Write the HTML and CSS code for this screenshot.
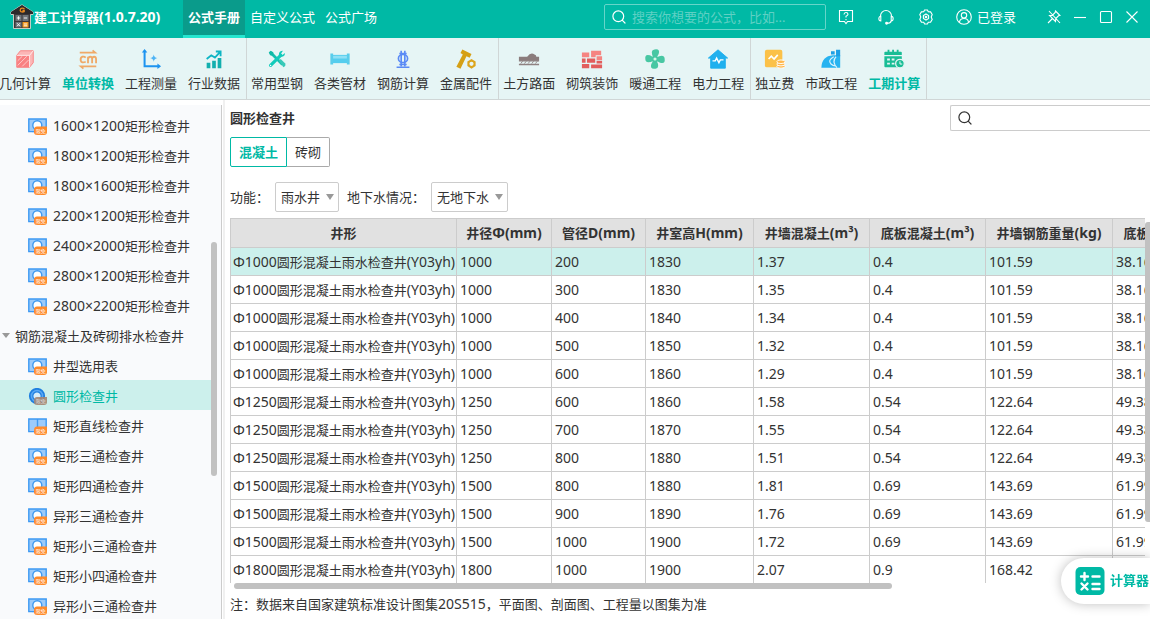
FILE: index.html
```html
<!DOCTYPE html>
<html lang="zh-CN">
<head>
<meta charset="utf-8">
<title>建工计算器</title>
<link rel="stylesheet" href="styles.css">
</head>
<body>
<svg class="defs" aria-hidden="true">
  <symbol id="search" viewBox="0 0 14 14"><g fill="none" stroke="currentColor" stroke-width="1.2" stroke-linecap="round"><circle cx="6.3" cy="6.3" r="5.4"/><path d="M10.4 10.4l2.6 2.6"/></g></symbol>
  <symbol id="badge" viewBox="0 0 20 18"><path d="M9 8.500h10v5.500q0 3-3 3H9q-3 0-3-3v-1.500q0-4 3-4z" fill="#ff8a2b"/><text x="7.800" y="14.800" font-size="5" fill="#fff">限免</text></symbol>
  <symbol id="well" viewBox="0 0 20 18"><path d="M.8 1h17.4v12.6H.8z" fill="#9ccbfb" stroke="#3d99f2" stroke-width="1.4"/><circle cx="9.3" cy="7.3" r="4.5" fill="#fff" stroke="#3d99f2" stroke-width="1.4"/><path d="M4 13.6h11" stroke="#3d99f2"/><use href="#badge"/></symbol>
  <symbol id="well-line" viewBox="0 0 20 18"><path d="M.8 1h17.4v12.6H.8z" fill="#9ccbfb" stroke="#3d99f2" stroke-width="1.4"/><path d="M9.5 1v12.6" stroke="#3d99f2" stroke-width="1.4"/><use href="#badge"/></symbol>
  <symbol id="well-round" viewBox="0 0 20 18"><circle cx="9" cy="8" r="7.2" fill="#5aa9f5" stroke="#1f7fe0" stroke-width="1.8"/><circle cx="9" cy="8" r="4.2" fill="#d8eefb" stroke="#1f7fe0" stroke-width="1.2"/><path d="M9 9h10v5q0 3-3 3H9q-3 0-3-3v-1q0-4 3-4z" fill="#a58672" opacity=".9"/><text x="7.800" y="14.800" font-size="5" fill="#ddd">限免</text></symbol>
</svg>

<header class="titlebar">
  <svg class="logo" viewBox="0 0 24 26"><path d="M12 .8L1 8v2.5h2.5V24.500h17V10.500H23V8z" fill="#3b3638" stroke="#efe3da" stroke-width=".8"/><path d="M12 1L1 8v2h22V8z" fill="#2c292b"/><path d="M14.500 4.800q-2.500-1.300-4 .2-.9 1.700.4 2.600 1.600.8 3.300 0V6.500h-1.700" fill="none" stroke="#e98b1e" stroke-width="1.300"/><path d="M5.500 11h6v6h-6zM12.500 11h6v6h-6zM5.500 18h6v5.500h-6z" fill="#6f7479"/><path d="M12.500 18h6v5.500h-6z" fill="#f39a1f"/><path d="M8.500 12.300v3.400M6.800 14h3.400M13.800 14h3.400M7 19.200l3 3M10 19.200l-3 3M13.800 20h3.400M13.800 21.800h3.400" stroke="#fff" stroke-width=".9"/></svg>
  <h1 class="app-name">建工计算器<span class="lat">(1.0.7.20)</span></h1>
  <nav class="tabs">
    <a href="#" class="tab active">公式手册</a>
    <a href="#" class="tab">自定义公式</a>
    <a href="#" class="tab">公式广场</a>
  </nav>
  <label class="top-search"><svg class="i14"><use href="#search"/></svg><input type="text" aria-label="搜索公式" placeholder="搜索你想要的公式，比如..."></label>
  <div class="actions">
    <button aria-label="帮助"><svg class="i16" viewBox="0 0 16 16"><path d="M1.500 1.500h13v11H9.600L8 14.500l-1.600-2H1.500z"/><path d="M6 5.500q.1-2 2-2t2 1.700Q10 6.300 8 7.300v1.200M8 10v1.200"/></svg></button>
    <button aria-label="客服"><svg class="i16" viewBox="0 0 16 16"><path d="M2.500 7.500V7a5.500 5.500 0 0 1 11 0v.5M2.800 7.200C.2 7.200.2 12 2.800 12zM13.200 7.200c2.600 0 2.600 4.800 0 4.800zM13.200 12q-.6 2.300-4 2.300"/><circle cx="8.600" cy="14.200" r=".9" fill="currentColor"/></svg></button>
    <button aria-label="设置"><svg class="i16" viewBox="0 0 16 16"><path d="M5.700 2.800L6.600 1h2.800l.9 1.800 2.300.1 1.600 2.600L13.200 8l1 2.500-1.600 2.600-2.300.1-.9 1.800H6.600l-.9-1.800-2.300-.1-1.600-2.600 1-2.500-1-2.500 1.600-2.600z"/><path d="M8 5l2.600 1.500v3L8 11 5.400 9.500v-3z"/><circle cx="8" cy="8" r=".8"/></svg></button>
    <button class="account"><svg class="i16" viewBox="0 0 16 16"><circle cx="8" cy="8" r="7.300"/><circle cx="8" cy="6.300" r="2.700"/><path d="M3.500 13q.5-3.500 4.500-3.500t4.500 3.500"/></svg>已登录</button>
  </div>
  <div class="window-buttons">
    <button aria-label="置顶"><svg class="i14" viewBox="0 0 14 14"><path d="M8.500 1l4.500 4.500-1.500.3-2.700 2.700-.3 3L2.500 5.500l3-.3 2.700-2.700zM5.500 8.500L1 13M2 1l11 12"/></svg></button>
    <button aria-label="最小化"><svg class="i14" viewBox="0 0 14 14"><path d="M1 7.500h12"/></svg></button>
    <button aria-label="最大化"><svg class="i14" viewBox="0 0 14 14"><rect x="1.500" y="1.500" width="11" height="11" rx="1"/></svg></button>
    <button aria-label="关闭"><svg class="i14" viewBox="0 0 14 14"><path d="M1.500 1.500l11 11M12.500 1.500l-11 11"/></svg></button>
  </div>
</header>

<nav class="toolbar">
  <div class="group">
    <a href="#" class="tool"><svg viewBox="0 0 24 24"><path d="M3 8l4-5h14v13l-4 5H3z" fill="#fcb6b6" stroke="#f87f80" stroke-linejoin="round"/><path d="M3 8h14v13H3z" fill="#f98182"/><path d="M17 8l4-5M17 8v13M3 8h14" stroke="#fff0f0"/><path d="M4 14l5-5M4 19l10-10M9 20l7-7" stroke="#fdd0d0"/></svg>几何计算</a>
    <a href="#" class="tool hot"><svg viewBox="0 0 24 24"><g fill="none" stroke="#efa968" stroke-width="1.800"><path d="M3 5h17l-3-2.500M21 20H4l3 2.500"/><path d="M9.500 10.500Q8 9 6 9.500 3.500 10.500 4 13.500q1 3.500 5.500 1.500M12 16.500v-7M12 12q.5-2.500 2.500-2.500T16.500 12v4.500M16.500 12q.3-2.500 2.200-2.500t2.100 2.500v4.500" stroke-width="2"/></g></svg>单位转换</a>
    <a href="#" class="tool"><svg viewBox="0 0 24 24"><path d="M5 3v17h16" fill="none" stroke="#1e94f0" stroke-width="2.200"/><path d="M5 1l3 4H2zM23 20l-4 3v-6z" fill="#1e94f0"/><path d="M15 7q.5 3.500 4 4-3.500.5-4 4-.5-3.500-4-4 3.500-.5 4-4z" fill="#4eb4f5"/></svg>工程测量</a>
    <a href="#" class="tool"><svg viewBox="0 0 24 24"><path d="M4 16h4v6H4zM10 14h4v8h-4zM16 11h4v11h-4z" fill="#12afae"/><path d="M4 12l5-4 4 2.500L19 4M14 3.800h5.200V9" fill="none" stroke="#0cb5c4" stroke-width="2"/></svg>行业数据</a>
  </div>
  <div class="group">
    <a href="#" class="tool"><svg viewBox="0 0 24 24"><path d="M5 5l13 13" stroke="#12bfae" stroke-width="3"/><path d="M3 5l2-2 3 1.500V7L7 8.500 4.500 8z" fill="#0fb9a6"/><path d="M14 14l2-2 5 5q1 3-2 4z" fill="#38c9b8"/><path d="M5 19L16 8" stroke="#12cbbb" stroke-width="3.500" stroke-linecap="round"/><path d="M18.500 3q-4.500 0-4.500 4.500Q15 10 17.500 9.500 21 9 20.500 5.500L18 7.500 16.500 6z" fill="#12cbbb"/><circle cx="5" cy="19" r=".8" fill="#fff"/></svg>常用型钢</a>
    <a href="#" class="tool"><svg viewBox="0 0 24 24"><path d="M4 7.500h16v9H4z" fill="#55cdee"/><path d="M4 8.500h16v3H4z" fill="#8fe0f5"/><path d="M1.500 6h3v12h-3zM19.500 6h3v12h-3z" fill="#5acdeb"/></svg>各类管材</a>
    <a href="#" class="tool"><svg viewBox="0 0 24 24"><g fill="none" stroke="#5b8bf5" stroke-width="1.800"><ellipse cx="12" cy="11.500" rx="5" ry="4.500"/><path d="M10 3v17M14 3v17M8 6h8M5 21h14M8 18h8"/></g></svg>钢筋计算</a>
    <a href="#" class="tool"><svg viewBox="0 0 24 24"><path d="M8 1.500l10 5-2 4-3.500-1.500L6 22.500l-4.500-2L8.500 7 6 5.500z" fill="#d5a016"/><path d="M18 12l4.500 2.600v5L18 22.500l-4.500-2.900v-5z" fill="#dca51d"/><circle cx="18" cy="17.200" r="2.300" fill="#e6f5f5"/></svg>金属配件</a>
  </div>
  <div class="group">
    <a href="#" class="tool"><svg viewBox="0 0 24 24"><path d="M1 13V9.500h9Q14 4 18 7q2 .5 2 2.500h3V13z" fill="#8a7c7c"/><path d="M1 18h22M1 14h22" stroke="#8f8181" stroke-width="1.600"/><path d="M3 17l2-2.500M7 17l2-2.500M11 17l2-2.500M15 17l2-2.500M19 17l2-2.500" stroke="#8f8181"/></svg>土方路面</a>
    <a href="#" class="tool"><svg viewBox="0 0 24 24"><path d="M1 5h8v5H1zM11 3h11v5h-6v2h-5zM17 9h6v4h-6z" fill="#f58481"/><path d="M1 11.500h4V16H1zM6.500 11.500h9V16h-9zM17 14h6v3h-6zM1 17.500h8V22H1zM11 18h12v4H11z" fill="#e25d5c"/></svg>砌筑装饰</a>
    <a href="#" class="tool"><svg viewBox="0 0 24 24"><g fill="#48c7a3"><path id="blade" d="M10.500 11Q6 2 11.500 1.500q6.500-1 4.500 5L13.500 11z"/><use href="#blade" transform="rotate(90 12 12)"/><use href="#blade" transform="rotate(180 12 12)"/><use href="#blade" transform="rotate(270 12 12)"/><circle cx="12" cy="12" r="3.600"/></g><circle cx="12" cy="12" r="1.700" fill="#d8f4ea"/></svg>暖通工程</a>
    <a href="#" class="tool"><svg viewBox="0 0 24 24"><path d="M12 2l10.500 9H20v11H4V11H1.500z" fill="#20b0ee" stroke="#20b0ee" stroke-linejoin="round"/><path d="M6 14h3l1.500-3 2.500 5 1.500-3H18" fill="none" stroke="#fff" stroke-width="1.500"/></svg>电力工程</a>
  </div>
  <div class="group">
    <a href="#" class="tool"><svg viewBox="0 0 24 24"><rect x="1" y="2" width="19" height="19" rx="2" fill="#fbc148"/><path d="M5 12l3-3 3 3 4-4.500" fill="none" stroke="#fff" stroke-width="1.800"/><g fill="#ffb84d" stroke="#fff"><ellipse cx="18.500" cy="20" rx="4.500" ry="2"/><ellipse cx="18.500" cy="17.500" rx="4.500" ry="2"/><ellipse cx="18.500" cy="15" rx="4.500" ry="2"/></g></svg>独立费</a>
    <a href="#" class="tool"><svg viewBox="0 0 24 24"><path d="M1.500 21.500Q2 9 14 8h8v13.500z" fill="#27b3f0"/><path d="M12 3.500h4V7h-4zM17.500 2h4.500v7h-4.500z" fill="#1c9fe5"/><path d="M17.500 9.500q-5 5 1 12M15 9.500q-7 4-3 8 2 2 5 2" fill="none" stroke="#d9f2fd" stroke-width="1.300"/></svg>市政工程</a>
    <a href="#" class="tool hot"><svg viewBox="0 0 24 24"><path d="M1.500 9h19v11q0 1-1 1h-17q-1 0-1-1zM1.500 7.500V5q0-1 1-1h17q1 0 1 1v2.500z" fill="#19bd95"/><path d="M6 2v4M11 2v4M16 2v4" stroke="#19bd95" stroke-width="2"/><path d="M4.500 12.500h3M9.500 12.500h3M4.500 17h3M9.500 17h3" stroke="#e6f5f5" stroke-width="2"/><circle cx="18.500" cy="17" r="4.700" fill="#19bd95" stroke="#e6f5f5" stroke-width="1.400"/><path d="M18.500 14.500v3H21" fill="none" stroke="#fff"/></svg>工期计算</a>
  </div>
</nav>

<div class="workspace">
  <aside class="sidebar">
    <ul class="tree">
      <li><a href="#" class="leaf"><svg><use href="#well"/></svg><span><span class="lat">1600×1200</span>矩形检查井</span></a></li>
      <li><a href="#" class="leaf"><svg><use href="#well"/></svg><span><span class="lat">1800×1200</span>矩形检查井</span></a></li>
      <li><a href="#" class="leaf"><svg><use href="#well"/></svg><span><span class="lat">1800×1600</span>矩形检查井</span></a></li>
      <li><a href="#" class="leaf"><svg><use href="#well"/></svg><span><span class="lat">2200×1200</span>矩形检查井</span></a></li>
      <li><a href="#" class="leaf"><svg><use href="#well"/></svg><span><span class="lat">2400×2000</span>矩形检查井</span></a></li>
      <li><a href="#" class="leaf"><svg><use href="#well"/></svg><span><span class="lat">2800×1200</span>矩形检查井</span></a></li>
      <li><a href="#" class="leaf"><svg><use href="#well"/></svg><span><span class="lat">2800×2200</span>矩形检查井</span></a></li>
      <li><button class="branch"><span class="caret"></span>钢筋混凝土及砖砌排水检查井</button></li>
      <li><a href="#" class="leaf"><svg><use href="#well"/></svg>井型选用表</a></li>
      <li><a href="#" class="leaf selected"><svg><use href="#well-round"/></svg>圆形检查井</a></li>
      <li><a href="#" class="leaf"><svg><use href="#well-line"/></svg>矩形直线检查井</a></li>
      <li><a href="#" class="leaf"><svg><use href="#well"/></svg>矩形三通检查井</a></li>
      <li><a href="#" class="leaf"><svg><use href="#well"/></svg>矩形四通检查井</a></li>
      <li><a href="#" class="leaf"><svg><use href="#well"/></svg>异形三通检查井</a></li>
      <li><a href="#" class="leaf"><svg><use href="#well"/></svg>矩形小三通检查井</a></li>
      <li><a href="#" class="leaf"><svg><use href="#well"/></svg>矩形小四通检查井</a></li>
      <li><a href="#" class="leaf"><svg><use href="#well"/></svg>异形小三通检查井</a></li>
    </ul>
    <div class="side-scroll"><div class="side-thumb"></div></div>
  </aside>

  <main class="content">
    <div class="heading">
      <h2>圆形检查井</h2>
      <label class="find"><svg class="i14"><use href="#search"/></svg><input type="text" aria-label="查找"></label>
    </div>
    <div class="segments">
      <button class="segment on">混凝土</button><button class="segment">砖砌</button>
    </div>
    <div class="filters">
      <label for="use">功能：</label>
      <span class="select"><select id="use"><option>雨水井</option></select></span>
      <label for="water">地下水情况：</label>
      <span class="select wide"><select id="water"><option>无地下水</option></select></span>
    </div>
    <div class="grid-area">
      <div class="grid-clip">
        <table>
          <colgroup><col class="c-name"><col class="c-dia"><col class="c-pipe"><col class="c-high"><col class="c-vol"><col class="c-vol"><col class="c-steel"><col class="c-steel"></colgroup>
          <thead><tr><th>井形</th><th>井径<span class="lat">Φ(mm)</span></th><th>管径<span class="lat">D(mm)</span></th><th>井室高<span class="lat">H(mm)</span></th><th>井墙混凝土<span class="lat">(m³)</span></th><th>底板混凝土<span class="lat">(m³)</span></th><th>井墙钢筋重量<span class="lat">(kg)</span></th><th>底板钢筋重量<span class="lat">(kg)</span></th></tr></thead>
          <tbody>
            <tr class="current"><td><span class="lat">Φ1000</span>圆形混凝土雨水检查井<span class="lat">(Y03yh)</span></td><td>1000</td><td>200</td><td>1830</td><td>1.37</td><td>0.4</td><td>101.59</td><td>38.16</td></tr>
            <tr><td><span class="lat">Φ1000</span>圆形混凝土雨水检查井<span class="lat">(Y03yh)</span></td><td>1000</td><td>300</td><td>1830</td><td>1.35</td><td>0.4</td><td>101.59</td><td>38.16</td></tr>
            <tr><td><span class="lat">Φ1000</span>圆形混凝土雨水检查井<span class="lat">(Y03yh)</span></td><td>1000</td><td>400</td><td>1840</td><td>1.34</td><td>0.4</td><td>101.59</td><td>38.16</td></tr>
            <tr><td><span class="lat">Φ1000</span>圆形混凝土雨水检查井<span class="lat">(Y03yh)</span></td><td>1000</td><td>500</td><td>1850</td><td>1.32</td><td>0.4</td><td>101.59</td><td>38.16</td></tr>
            <tr><td><span class="lat">Φ1000</span>圆形混凝土雨水检查井<span class="lat">(Y03yh)</span></td><td>1000</td><td>600</td><td>1860</td><td>1.29</td><td>0.4</td><td>101.59</td><td>38.16</td></tr>
            <tr><td><span class="lat">Φ1250</span>圆形混凝土雨水检查井<span class="lat">(Y03yh)</span></td><td>1250</td><td>600</td><td>1860</td><td>1.58</td><td>0.54</td><td>122.64</td><td>49.38</td></tr>
            <tr><td><span class="lat">Φ1250</span>圆形混凝土雨水检查井<span class="lat">(Y03yh)</span></td><td>1250</td><td>700</td><td>1870</td><td>1.55</td><td>0.54</td><td>122.64</td><td>49.38</td></tr>
            <tr><td><span class="lat">Φ1250</span>圆形混凝土雨水检查井<span class="lat">(Y03yh)</span></td><td>1250</td><td>800</td><td>1880</td><td>1.51</td><td>0.54</td><td>122.64</td><td>49.38</td></tr>
            <tr><td><span class="lat">Φ1500</span>圆形混凝土雨水检查井<span class="lat">(Y03yh)</span></td><td>1500</td><td>800</td><td>1880</td><td>1.81</td><td>0.69</td><td>143.69</td><td>61.99</td></tr>
            <tr><td><span class="lat">Φ1500</span>圆形混凝土雨水检查井<span class="lat">(Y03yh)</span></td><td>1500</td><td>900</td><td>1890</td><td>1.76</td><td>0.69</td><td>143.69</td><td>61.99</td></tr>
            <tr><td><span class="lat">Φ1500</span>圆形混凝土雨水检查井<span class="lat">(Y03yh)</span></td><td>1500</td><td>1000</td><td>1900</td><td>1.72</td><td>0.69</td><td>143.69</td><td>61.99</td></tr>
            <tr><td><span class="lat">Φ1800</span>圆形混凝土雨水检查井<span class="lat">(Y03yh)</span></td><td>1800</td><td>1000</td><td>1900</td><td>2.07</td><td>0.9</td><td>168.42</td><td></td></tr>
          </tbody>
        </table>
      </div>
      <div class="v-thumb"></div>
    </div>
    <div class="h-thumb"></div>
    <p class="note">注：数据来自国家建筑标准设计图集<span class="lat">20S515</span>，平面图、剖面图、工程量以图集为准</p>
  </main>
</div>

<button class="calculator"><svg viewBox="0 0 29 29"><rect width="29" height="28" rx="5" fill="#00b9a5"/><path d="M5.500 9.500h7M9 6v7M17 9.500h7M6 16.500l6 6M12 16.500l-6 6M17 17h7M17 22h7" stroke="#fff" stroke-width="2.400" stroke-linecap="round"/></svg>计算器</button>
</body>
</html>
```
FILE: styles.css
```css
* { box-sizing: border-box; }
body {
  margin: 0;
  height: 100vh;
  display: flex;
  flex-direction: column;
  overflow: hidden;
  background: #fff;
  color: #333;
  font: 13px/20px "Noto Sans", "Noto Sans CJK SC", sans-serif;
}
button, input, select { font: inherit; color: inherit; }
button { padding: 0; border: 0; background: none; }
a { color: inherit; text-decoration: none; }
h1, h2, p, ul { margin: 0; padding: 0; font-size: 13px; }
ul { list-style: none; }
.defs { position: absolute; width: 0; height: 0; }
.lat { font-size: 14px; }
.i14 { width: 14px; height: 14px; }
.i16 { width: 16px; height: 16px; }

.titlebar {
  flex: none;
  height: 38px;
  display: flex;
  padding: 0 11px 0 10px;
  background: #00b9a5;
  color: #fff;
}
.logo { width: 24px; height: 26px; margin-top: 4px; }
.app-name { width: 149px; line-height: 34px; white-space: nowrap; }
.tabs { display: flex; flex: 1; }
.tab { height: 38px; padding: 0 5px; line-height: 34px; white-space: nowrap; }
.tab.active { background: #0a9b8b; border-bottom: 3px solid #25e6cf; font-weight: 700; }
.top-search {
  display: flex;
  align-items: center;
  gap: 6px;
  width: 222px;
  height: 26px;
  margin-top: 4px;
  padding: 0 7px;
  border: 1px solid #66d5c9;
  border-radius: 2px;
}
.top-search input { flex: 1; min-width: 0; padding: 0; border: 0; outline: 0; background: none; }
.top-search input::placeholder { color: #5fd0c4; opacity: 1; }
.actions, .window-buttons { display: flex; align-items: center; height: 33px; }
.actions { gap: 24px; margin-left: 12px; }
.window-buttons { gap: 12px; margin-left: 31px; }
.actions button, .window-buttons button { display: flex; align-items: center; }
.actions .account { gap: 5px; margin-left: -2px; }
.actions svg, .window-buttons svg { fill: none; stroke: currentColor; stroke-width: 1.1; }

.toolbar {
  flex: none;
  display: flex;
  height: 62px;
  margin-left: -5px;
  background: #e6f5f5;
  border-bottom: 1px solid #d0d6d6;
}
.group { display: flex; gap: 1px; border-right: 1px solid #d0d6d6; }
.tool {
  display: flex;
  flex-direction: column;
  align-items: center;
  gap: 3px;
  padding: 10px 6px 0 4px;
  white-space: nowrap;
}
.tool svg { width: 22px; height: 22px; }
.tool.hot { color: #00b9a5; font-weight: 700; }

.workspace { flex: 1; min-height: 0; display: flex; }
.sidebar {
  flex: none;
  display: flex;
  width: 222px;
  margin-top: 5px;
  padding-top: 5px;
  background: #f9fafc;
  border-right: 1px solid #ccc;
  overflow: hidden;
}
.tree { width: 211px; }
.leaf, .branch { display: flex; align-items: center; width: 100%; height: 30px; padding-top: 1px; white-space: nowrap; }
.leaf { gap: 5px; padding-left: 28px; }
.leaf svg { width: 20px; height: 18px; margin-top: 2px; }
.leaf.selected { background: #ccf0ec; color: #00b9a5; }
.branch { gap: 5px; padding-left: 2px; }
.caret { border: 4px solid transparent; border-top: 5px solid #999; border-bottom: 0; }
.side-thumb { width: 6px; height: 234px; margin-top: 132px; border-radius: 3px; background: #c1c1c1; }

.content {
  flex: 1;
  min-width: 0;
  display: flex;
  flex-direction: column;
  margin-left: 1px;
  padding: 5px 0 0 5px;
  border-left: 2px solid #f0f0f0;
}
.heading { display: flex; justify-content: space-between; align-items: center; }
.find {
  display: flex;
  align-items: center;
  width: 200px;
  height: 26px;
  padding-left: 7px;
  border: 1px solid #ccc;
  border-right: 0;
  border-radius: 2px 0 0 2px;
}
.find input { flex: 1; min-width: 0; border: 0; outline: 0; background: none; }
.segments { display: flex; margin-top: 6px; }
.segment { height: 30px; padding: 0 8px; border: 1px solid #aaa; border-left: 0; border-radius: 0 2px 2px 0; }
.segment.on { border: 1px solid #00b9a5; border-radius: 2px 0 0 2px; color: #00b9a5; font-weight: 700; }
.filters { display: flex; align-items: center; margin-top: 15px; }
.filters label { margin-right: 6px; }
.select { position: relative; width: 64px; margin-right: 8px; }
.select.wide { width: 77px; }
.select select {
  display: block;
  width: 100%;
  height: 30px;
  padding: 0 0 0 5px;
  appearance: none;
  border: 1px solid #ccc;
  border-radius: 2px;
  background: #fff;
}
.select::after {
  content: "";
  position: absolute;
  top: 12px;
  right: 5px;
  border: 4px solid transparent;
  border-top: 6px solid #999;
  border-bottom: 0;
  pointer-events: none;
}

.grid-area { flex: 1; min-height: 0; display: flex; margin-top: 6px; }
.grid-clip { flex: 1; min-width: 0; overflow: hidden; }
table { width: 1010px; table-layout: fixed; border-collapse: collapse; }
.c-name { width: 226px; }
.c-dia { width: 95px; }
.c-pipe { width: 94px; }
.c-high { width: 108px; }
.c-vol { width: 116px; }
.c-steel { width: 127px; }
th, td { border: 1px solid #ccc; white-space: nowrap; }
th { height: 29px; padding: 0; background: #e1e1e1; text-align: center; }
td { height: 28px; padding: 0 3px; font-size: 14px; }
td:first-child { padding: 0 2px; font-size: 13px; }
.current { background: #ccf0ec; }
.v-thumb { width: 5px; height: 300px; margin-top: 4px; border-radius: 3px 0 0 3px; background: #c1c1c1; }
.h-thumb { flex: none; width: 71.5%; height: 6px; margin-left: 4px; border-radius: 3px; background: #c1c1c1; }
.note { line-height: 30px; }

.calculator {
  position: fixed;
  right: 0;
  bottom: 15px;
  display: flex;
  align-items: center;
  gap: 5px;
  height: 46px;
  padding: 0 1px 2px 14px;
  border-radius: 23px 0 0 23px;
  background: #fff;
  box-shadow: 0 0 12px rgba(0, 0, 0, .25);
  color: #00b9a5;
  font-weight: 700;
}
.calculator svg { width: 30px; height: 29px; margin-top: 2px; }
```
